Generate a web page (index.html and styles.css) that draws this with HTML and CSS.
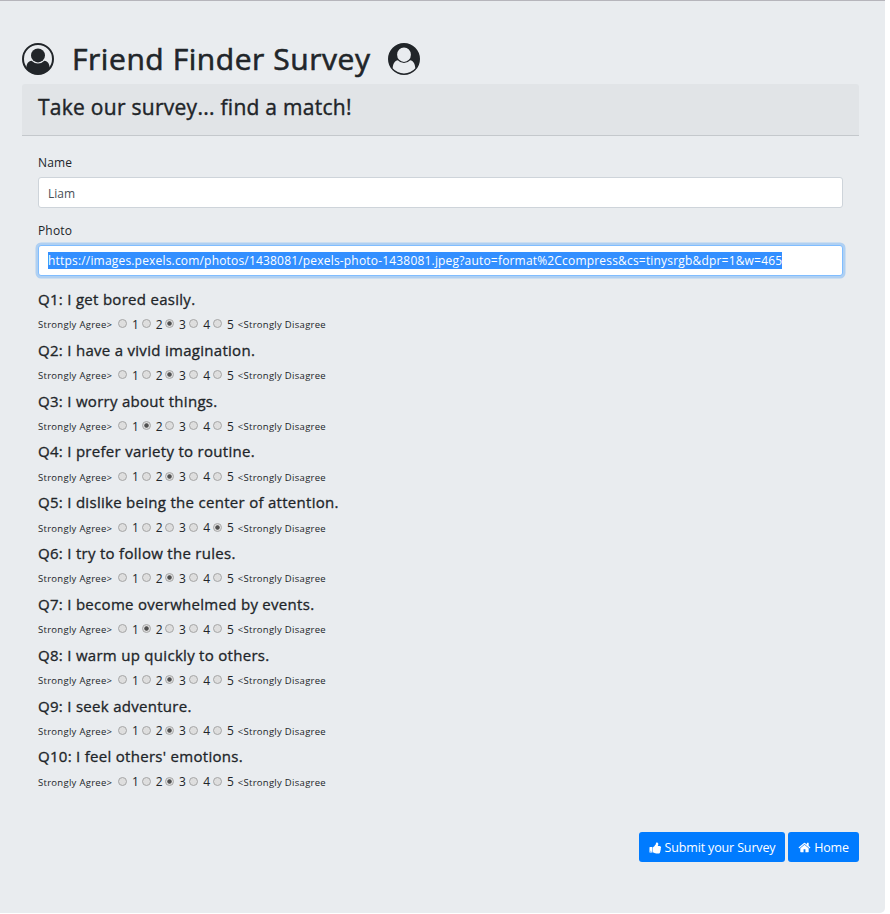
FILE: index.html
```html
<!DOCTYPE html>
<html lang="en">
<head>
<meta charset="utf-8">
<title>Friend Finder Survey</title>
<link rel="stylesheet" href="styles.css">
</head>
<body>
<main class="jumbotron">
  <h1 class="title">
    <svg class="avatar" viewBox="0 0 32 32"><circle cx="16" cy="16" r="15" fill="none" stroke="currentColor" stroke-width="2"/><circle cx="16" cy="12.400" r="7"/><path d="M4.200 25.500C4.500 21 6 18 9.600 17.700Q12.500 20.600 16 20.600T22.400 17.700C26 18 27.500 21 27.800 25.500A15 15 0 0 1 4.200 25.500Z"/></svg>
    <span class="title-text">Friend Finder Survey</span>
    <svg class="avatar" viewBox="0 0 32 32"><path fill-rule="evenodd" d="M16 0a16 16 0 1 1 0 32a16 16 0 0 1 0-32ZM16 4.500a6.900 7.200 0 1 0 0 14.400a6.900 7.200 0 0 0 0-14.400ZM9.800 17.200C6.800 17.800 5 20.500 4.700 25.200A14.700 14.700 0 0 0 27.300 25.200C27 20.500 25.200 17.800 22.200 17.200Q19.600 20 16 20T9.800 17.200Z"/></svg>
  </h1>
  <h2 class="card-header"><span>Take our survey... find a match!</span></h2>
  <form class="form">
    <label class="label" for="name">Name</label>
    <div class="field" id="name"><span>Liam</span></div>
    <label class="label" for="photo">Photo</label>
    <div class="field focused" id="photo"><span class="selected">https://images.pexels.com/photos/1438081/pexels-photo-1438081.jpeg?auto=format%2Ccompress&amp;cs=tinysrgb&amp;dpr=1&amp;w=465</span></div>
    <div class="questions" id="questions"></div>
  </form>
  <div class="actions">
    <button class="btn submit"><svg class="icon" viewBox="0 0 1664 1792"><path d="M256 1408q0-26-19-45t-45-19q-27 0-45.500 19t-18.500 45q0 27 18.500 45.500t45.500 18.500q26 0 45-18.500t19-45.500zm160-512v640q0 26-19 45t-45 19h-288q-26 0-45-19t-19-45v-640q0-26 19-45t45-19h288q26 0 45 19t19 45zm1184 0q0 86-55 149 15 44 15 76 3 76-43 137 17 56 0 117-15 57-54 94 9 112-49 181-64 76-197 78h-129q-66 0-144-15.500t-121.500-29-120.500-39.500q-123-43-158-44-26-1-45-19.500t-19-44.500v-641q0-25 18-43.500t43-20.500q24-2 76-59t101-121q68-87 101-120 18-18 31-48t17.500-48.500 13.500-60.500q7-39 12.500-61t19.500-52 34-50q19-19 45-19 46 0 82.500 10.500t60 26 40 40.500 24 45 12 50 5 45 .5 39q0 38-9.500 76t-19 60-27.500 56q-3 6-10 18t-11 22-8 24h277q78 0 135 57t57 135z"/></svg><span>Submit your Survey</span></button>
    <button class="btn home"><svg class="icon" viewBox="0 0 1792 1792"><path d="M1472 992v480q0 26-19 45t-45 19h-384v-384h-256v384h-384q-26 0-45-19t-19-45v-480q0-1 .5-3t.5-3l575-474 575 474q1 2 1 6zm223-69l-62 74q-8 9-21 11h-3q-13 0-21-7l-692-577-692 577q-12 8-24 7-13-2-21-11l-62-74q-8-10-7-23.500t11-21.500l719-599q32-26 76-26t76 26l244 204v-195q0-14 9-23t23-9h192q14 0 23 9t9 23v408l219 182q10 8 11 21.500t-7 23.500z"/></svg><span>Home</span></button>
  </div>
</main>
<script src="survey.js"></script>
</body>
</html>
```
FILE: survey.js
```js
const questions = [
  ["I get bored easily.", 3],
  ["I have a vivid imagination.", 3],
  ["I worry about things.", 2],
  ["I prefer variety to routine.", 3],
  ["I dislike being the center of attention.", 5],
  ["I try to follow the rules.", 3],
  ["I become overwhelmed by events.", 2],
  ["I warm up quickly to others.", 3],
  ["I seek adventure.", 3],
  ["I feel others' emotions.", 3]
];

document.getElementById("questions").innerHTML = questions.map(([text, answer], i) => `
  <section class="question">
    <h3 class="question-title"><span>Q${i + 1}: ${text}</span></h3>
    <div class="scale">
      <small class="agree">Strongly Agree&gt;</small>
      ${[1, 2, 3, 4, 5].map(n => `<label class="choice"><i class="radio${n === answer ? " checked" : ""}"></i><b>${n}</b></label>`).join("")}
      <small class="disagree">&lt;Strongly Disagree</small>
    </div>
  </section>`).join("");
```
FILE: styles.css
```css
* { box-sizing: border-box; }
body { margin: 0; background: #fff; color: #212529; font-family: "Open Sans", "Noto Sans", sans-serif; font-size: 12px; }
h1, h2, h3 { margin: 0; font-weight: 500; -webkit-text-stroke: 0.3px currentColor; }
.jumbotron { width: 885px; height: 913px; padding: 35px 26px 0 22px; background: #e9ecef; border-top: 1px solid #b6b5bb; border-radius: 0 0 5px 0; }
.title { display: flex; align-items: center; height: 48px; padding-bottom: 2px; font-size: 30px; line-height: 46px; letter-spacing: 0.56px; -webkit-text-stroke-width: 0.6px; }
.title-text { width: 298px; margin: 0 18px; white-space: nowrap; }
.avatar { width: 32px; height: 32px; fill: currentColor; flex: none; -webkit-text-stroke: 0; }
.card-header { height: 52px; padding: 0 16px; background: #e1e4e7; border-bottom: 1px solid #c4c8cc; border-radius: 3px 3px 0 0; font-size: 21px; line-height: 46px; letter-spacing: 0.27px; -webkit-text-stroke-width: 0.4px; }
.form { padding: 16px 16px 0; }
.label { display: block; height: 25px; line-height: 21px; letter-spacing: 0.15px; }
.field { display: flex; align-items: center; height: 31px; margin-bottom: 12px; padding: 1px 9px 0; background: #fff; border: 1px solid #ced4da; border-radius: 3px; color: #495057; white-space: nowrap; }
.focused { padding-top: 0; border-color: #80bdff; box-shadow: 0 0 0 2.5px #b0d0f2; margin-bottom: 10px; }
.selected { background: #338fff; color: #fff; line-height: 17px; letter-spacing: 0.184px; }
.question { height: 50.82px; }
.question-title { height: 27px; font-size: 15px; line-height: 26px; letter-spacing: 0.29px; white-space: nowrap; }
.scale { display: flex; height: 23.82px; align-items: center; line-height: 20px; white-space: nowrap; }
.agree { width: 80px; }
small { padding-top: 1px; font-size: 9.5px; letter-spacing: 0.29px; }
.disagree { margin-left: 1px; }
.choice { display: flex; align-items: center; width: 23.75px; }
.choice:nth-of-type(2) { width: 23.2px; }
.choice:nth-of-type(3) { width: 24.3px; }
.choice b { margin-left: 5px; font-weight: 400; }
.radio { width: 9px; height: 9px; margin-bottom: 2px; border: 1px solid #a6a6a6; border-radius: 50%; background: #dedede; }
.checked { background: radial-gradient(circle, #505050 0 1.8px, #dedede 2.6px); }
.actions { display: flex; justify-content: flex-end; gap: 3px; margin-top: 38.2px; }
.btn { display: flex; align-items: center; justify-content: center; gap: 3px; height: 30px; padding: 0; border: 0; border-radius: 3px; background: #007bff; color: #fff; font: inherit; font-size: 12.5px; letter-spacing: -0.15px; white-space: nowrap; }
.submit { width: 146px; }
.home { width: 71px; }
.icon { width: 13px; height: 13px; fill: currentColor; flex: none; }
```
